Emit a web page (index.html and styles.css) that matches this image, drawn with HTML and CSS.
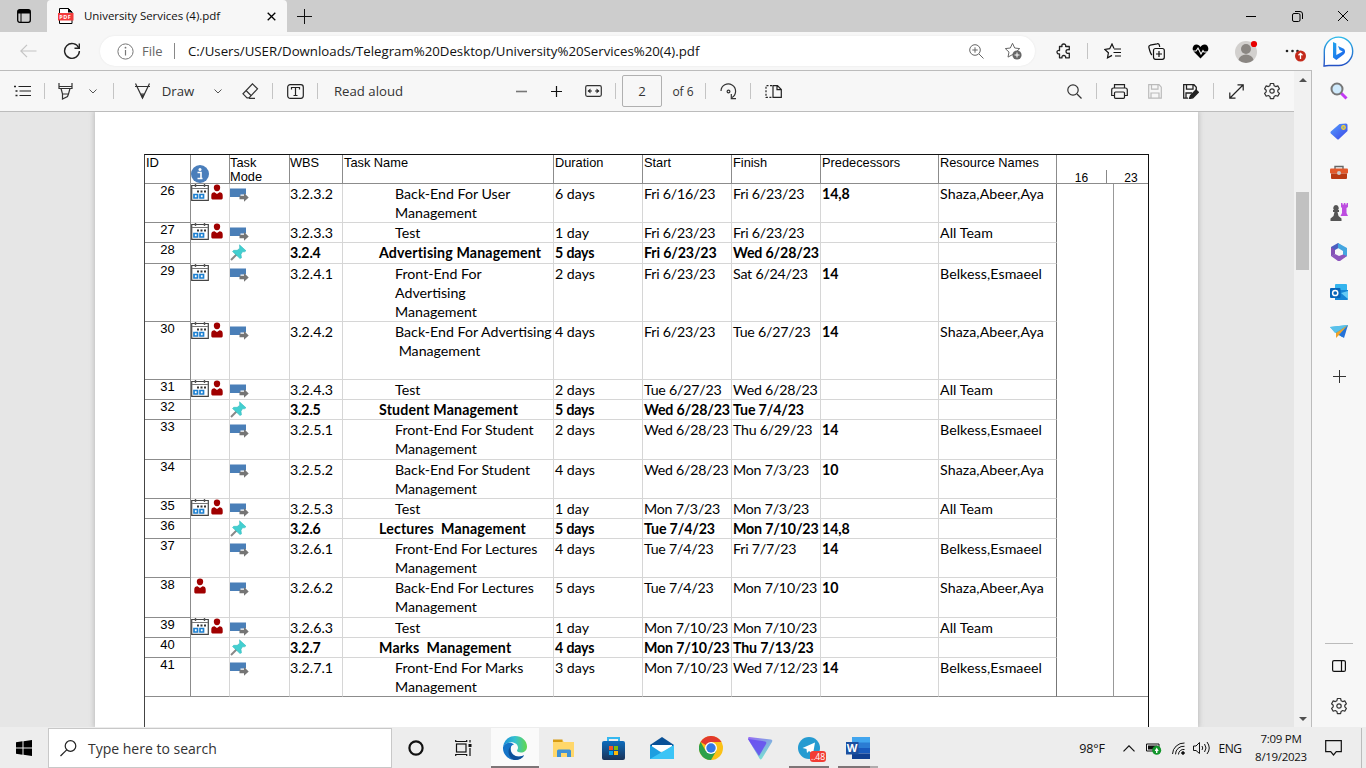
FILE: index.html
```html
<!DOCTYPE html>
<html lang="en">
<head>
<meta charset="utf-8">
<title>University Services (4).pdf</title>
<link rel="stylesheet" href="styles.css">
</head>
<body>
<svg class="sprite" xmlns="http://www.w3.org/2000/svg">
  <symbol id="cal" viewBox="0 0 18 17"><path d="M.7 1.500h16.600v14.800H.7z" fill="#fff" stroke="#444" stroke-width="1.200"/><path d="M1 4.500h16" stroke="#777"/><path d="M4.500 0v3M13.500 0v3" stroke="#555" stroke-width="1.400"/><path d="M6 7.500h2M9.500 7.500h2M13 7.500h2" stroke="#333" stroke-width="2"/><path d="M3 10.500h3.500v3.500H3zM9 10.500h3.500v3.500H9z" fill="#fff" stroke="#1c7fd0" stroke-width="1.700"/></symbol>
  <symbol id="man" viewBox="0 0 12 16"><path d="M6 .5a3.200 3.200 0 0 1 3.200 3.200C9.200 5.500 8 7.300 6 7.300S2.800 5.500 2.800 3.700A3.200 3.200 0 0 1 6 .5zM.3 11.500C.3 9.500 1.500 8.300 3.500 8.300L6 10l2.500-1.700c2 0 3.200 1.200 3.200 3.200v2.500c0 1-1 1.500-2 1.500H2.300c-1 0-2-.5-2-1.500z" fill="#a00000"/></symbol>
  <symbol id="auto" viewBox="0 0 19 14"><path d="M0 .5h16v6h-5.500v2.500H0z" fill="#4a7fb8"/><path d="M9.500 7.700h4.500V5l4.700 4.500-4.700 4.300V11.300H9.500z" fill="#757575"/></symbol>
  <symbol id="pin" viewBox="0 0 17 17"><path d="M1 16l6-6" stroke="#888" stroke-width="2"/><path d="M9.500.8l6.500 6-1.500 1-2 0-1.500 2.500.5 3.500-1.500.8L2.500 7.500l1.200-1.200 3.500 0 2.500-2z" fill="#43cfd0" stroke="#2db5b8" stroke-width=".5"/></symbol>
  <symbol id="chev" viewBox="0 0 10 10"><path d="M1.500 3.500L5 7l3.500-3.500" fill="none" stroke="#555" stroke-width="1"/></symbol>
  <symbol id="gear" viewBox="0 0 18 18"><g fill="none" stroke="#333" stroke-width="1.200"><circle cx="9" cy="9" r="2.200"/><path d="M7.400 1.500h3.200l.5 2.200 1.600.9 2.100-.7 1.600 2.800-1.600 1.500v1.700l1.600 1.500-1.600 2.800-2.100-.7-1.600.9-.5 2.200H7.400l-.5-2.200-1.600-.9-2.100.7-1.600-2.800 1.600-1.500V8.200L1.600 6.700l1.600-2.800 2.100.7 1.600-.9z" stroke-linejoin="round"/></g></symbol>
</svg>

<header class="tabstrip">
  <span class="slot"><svg width="14" height="14" viewBox="0 0 14 14"><rect x=".7" y=".7" width="12.600" height="12.600" rx="2" fill="none" stroke="#000" stroke-width="1.300"/><path d="M1 1h12v3.500H1z"/><path d="M4 4v9" stroke="#000"/></svg></span>
  <div class="tab">
    <svg width="16" height="16" viewBox="0 0 16 16"><path d="M1.500.5h9l3.500 3.500v11.500H1.500z" fill="#fff" stroke="#000"/><path d="M10 0v4.500h4.500" fill="#000"/><rect y="5" width="15.500" height="7.500" fill="#f33b3b"/><text x="1.300" y="11.200" class="pdftext">PDF</text></svg>
    <span class="tab-title">University Services (4).pdf</span>
    <svg class="tab-close" width="9" height="9" viewBox="0 0 9 9"><path d="M.7.7l7.600 7.600M8.300.7L.7 8.300" stroke="#000" stroke-width="1.300"/></svg>
  </div>
  <span class="slot new"><svg width="15" height="15"><path d="M7.500 0v15M0 7.500h15" stroke="#111"/></svg></span>
  <div class="wincontrols">
    <span><svg width="10" height="10"><path d="M0 5.500h10" stroke="#000"/></svg></span>
    <span><svg width="11" height="11" viewBox="0 0 11 11" fill="none" stroke="#000"><rect x=".5" y="2.500" width="7.500" height="8" rx="1.500"/><path d="M3 .5h5a2.500 2.500 0 0 1 2.500 2.500v5"/></svg></span>
    <span><svg width="10" height="10"><path d="M0 0l10 10M10 0L0 10" stroke="#000"/></svg></span>
  </div>
</header>

<nav class="addressbar">
  <span><svg width="17" height="14" viewBox="0 0 17 14" fill="none" stroke="#c4c4c4" stroke-width="1.200"><path d="M1 7h15.500M7 .8L.8 7 7 13.200"/></svg></span>
  <span><svg width="18" height="18" viewBox="0 0 18 18" fill="none" stroke="#222" stroke-width="1.400"><path d="M15.800 6A7.400 7.400 0 1 0 16.400 9"/><path d="M16.300 1.500V6.200h-4.800"/></svg></span>
  <i></i>
  <div class="url">
    <svg width="17" height="17" viewBox="0 0 17 17"><circle cx="8.500" cy="8.500" r="7.600" fill="none" stroke="#777"/><path d="M8.500 7v5.500" stroke="#777" stroke-width="1.200"/><circle cx="8.500" cy="4.700" r=".9" fill="#777"/></svg>
    <span class="scheme">File</span><i class="usep"></i>
    <span class="path">C:/Users/USER/Downloads/Telegram%20Desktop/University%20Services%20(4).pdf</span>
    <svg class="uzoom" width="15" height="15" viewBox="0 0 15 15" fill="none" stroke="#666"><circle cx="6" cy="6" r="5.300"/><path d="M10 10l4.500 4.500M3.300 6h5.400M6 3.300v5.400"/></svg>
    <svg width="18" height="18" viewBox="0 0 18 18"><path d="M8.500 1.300l2.200 4.700 5 .6-3.700 3.500 1 5-4.500-2.500L4 15.100l1-5L1.300 6.600l5-.6z" fill="#fff" stroke="#666"/><circle cx="13" cy="13" r="4.600" fill="#666"/><path d="M10.500 13h5M13 10.500v5" stroke="#fff"/></svg>
  </div>
  <i></i>
  <span><svg width="16" height="17" viewBox="0 0 16 17" fill="none" stroke="#222" stroke-width="1.300"><path d="M3.500 3.500H6C5.500 1.500 6.500 1 7.800 1s2.300.8 1.800 2.500h3.700v3.300c-2-.5-3.300.3-3.300 1.700s1.300 2.200 3.300 1.700v4.600H9.600c.4-1.500-.5-2.300-1.800-2.300S5.600 13.300 6 14.800H3.500v-4C1.700 11 1 10.200 1 9s1-1.800 2.500-1.500z" stroke-linejoin="round"/></svg></span>
  <b></b>
  <span><svg width="17" height="16" viewBox="0 0 17 16" fill="none" stroke="#111" stroke-width="1.200"><path d="M10 5.500L8 1 5.700 5.700.8 6.400l3.600 3.400-.9 5 4.500-2.400"/><path d="M10 6h7M9.500 9.500H17M11 13h6"/></svg></span>
  <span><svg width="17" height="17" viewBox="0 0 17 17" fill="none" stroke="#111" stroke-width="1.200"><path d="M4 12C2.500 11 1.500 7 .9 4.500c-.3-1.300.3-2 1.300-2.300L9 .8c1.300-.3 2 .2 2.300 1.200l.4 2"/><rect x="5.500" y="5.500" width="10.800" height="10.800" rx="2"/><path d="M8 11h6M11 8v6"/></svg></span>
  <span><svg width="17" height="15" viewBox="0 0 17 15"><path d="M8.500 14.500L1.600 7.600C-.5 4.900 1 .5 4.500.5 6.300.5 7.600 1.600 8.500 3c.9-1.400 2.200-2.500 4-2.500 3.500 0 5 4.400 2.900 7.100z"/><path d="M0 7h4l2-3 3 6 2-3.500 1 1.500h5" fill="none" stroke="#f7f7f7" stroke-width="1.100"/></svg></span>
  <span><svg width="23" height="23" viewBox="0 0 23 23"><circle cx="11" cy="12" r="11" fill="#d2d0ce"/><circle cx="11" cy="9" r="5" fill="#8a8682"/><path d="M3.500 20a7.600 6.500 0 0 1 15 0A11 11 0 0 1 3.500 20z" fill="#8a8682"/><circle cx="19" cy="4" r="3.100" fill="#e80000"/></svg></span>
  <span><svg width="28" height="22" viewBox="0 0 28 22"><g fill="#222"><circle cx="8" cy="11" r="1.300"/><circle cx="13.500" cy="11" r="1.300"/><circle cx="18.500" cy="11" r="1.300"/></g><circle cx="21.500" cy="16" r="5.500" fill="#c42b1c"/><path d="M21.500 19v-5.500M19.500 15.300l2-2 2 2" fill="none" stroke="#fff" stroke-width="1.300"/></svg></span>
  <span><svg width="31" height="31" viewBox="0 0 31 31"><defs><linearGradient id="bg1" x2="0" y2="1"><stop stop-color="#2cb9e9"/><stop offset="1" stop-color="#2450c4"/></linearGradient><linearGradient id="bg2" x2="1" y2="1"><stop stop-color="#23a6ee"/><stop offset="1" stop-color="#1b5dea"/></linearGradient></defs><path d="M1 30c.5-4 .3-9 .3-14.500A14.200 14.200 0 1 1 15.800 29.500H6C4 29.500 2.500 30 1 30z" fill="#fff" stroke="url(#bg1)" stroke-width="1.400"/><path d="M10 6l3.300 1.600v11.500l6.500-3.500-3.200-1.500-1.600-4 5.800 2.600c1.500 1 2 4.500-.5 6L13.300 24 10 21.500z" fill="url(#bg2)"/></svg></span>
</nav>

<div class="middle">
  <div class="viewer">
    <div class="toolbar">
      <span><svg width="17" height="12" viewBox="0 0 17 12"><path d="M4.500 1.500H17M5.500 6H17M5.500 10.500H17" stroke="#222" stroke-width="1.200"/><path d="M0 1.500h2M1.500 6h2M1.500 10.500h2" stroke="#222" stroke-width="1.700"/></svg></span><b></b>
      <span><svg width="15" height="17" viewBox="0 0 15 17" fill="none" stroke="#333" stroke-width="1.200"><path d="M1 0v5.500h13V0M1.500 3.500h12M3 5.500L4.500 11h6L12 5.500M4.500 11v5l5-2.500 1-2.500"/></svg></span>
      <span><svg width="10" height="10"><use href="#chev"/></svg></span><b></b>
      <span><svg width="17" height="17" viewBox="0 0 17 17"><path d="M1.500.5L8.500 15l7-14.500M1 3.500h15M6 11h5" fill="none" stroke="#333" stroke-width="1.200"/><path d="M6.500 11.500h4l-2 4.500z" fill="#333"/></svg></span>
      <span class="txt">Draw</span>
      <span><svg width="10" height="10"><use href="#chev"/></svg></span>
      <span><svg width="17" height="16" viewBox="0 0 17 16" fill="none" stroke="#333" stroke-width="1.200"><path d="M10.500.8l5 5-8.500 9H5L1 10.800zM4 7.500l5 5M7 15.300h6"/></svg></span><b></b>
      <span><svg width="17" height="15" viewBox="0 0 17 15" fill="none" stroke="#222" stroke-width="1.200"><rect x=".7" y=".7" width="15.600" height="13.600" rx="2.500"/><path d="M4.500 5.500v-2h8v2M8.500 3.500v8M6.500 11.500h4"/></svg></span><b></b>
      <span class="txt">Read aloud</span><i></i>
      <span><svg width="11" height="11"><path d="M0 5.500h11" stroke="#777" stroke-width="1.600"/></svg></span>
      <span><svg width="11" height="11"><path d="M0 5.500h11M5.500 0v11" stroke="#111" stroke-width="1.200"/></svg></span>
      <span><svg width="17" height="12" viewBox="0 0 17 12" fill="none" stroke="#333" stroke-width="1.200"><rect x=".7" y=".7" width="15.600" height="10.600" rx="1.500"/><path d="M3 6h4M10 6h4"/><path d="M5.500 3.500L2.500 6l3 2.500zM11.500 3.500l3 2.500-3 2.500z" fill="#333" stroke="none"/></svg></span><b></b>
      <span class="pageno">2</span><span class="txt of">of 6</span><b></b>
      <span><svg width="17" height="17" viewBox="0 0 17 17" fill="none" stroke="#333" stroke-width="1.200"><path d="M1 8A7.300 7.300 0 1 1 12 14.500"/><circle cx="8.500" cy="8.500" r="1.400"/><path d="M11.300 11v4.700H16"/></svg></span><b></b>
      <span><svg width="17" height="13" viewBox="0 0 17 13" fill="none" stroke="#222" stroke-width="1.200"><path d="M7 .7H1v11.600h6" stroke-dasharray="2 1.500"/><path d="M8 .7h4.500L16.300 4.500v7.800H8zM12 .7v4h4"/></svg></span><i></i>
      <span><svg width="15" height="15" viewBox="0 0 15 15" fill="none" stroke="#333" stroke-width="1.200"><circle cx="6" cy="6" r="5.200"/><path d="M10 10l4.500 4.500"/></svg></span><b></b>
      <span><svg width="17" height="15" viewBox="0 0 17 15" fill="none" stroke="#222" stroke-width="1.200"><path d="M3.500 4V.7h10V4M3.500 11.500H.7V6c0-1.300.7-2 2-2h11.600c1.300 0 2 .7 2 2v5.500h-2.800"/><rect x="3.500" y="8" width="10" height="6.300" rx="1"/></svg></span>
      <span><svg width="14" height="15" viewBox="0 0 14 15" fill="none" stroke="#bbb" stroke-width="1.200"><path d="M.7.7H11l2.300 2.500v11H.7zM3.500.7v4.500H10V.7M3 14V9h8v5"/></svg></span>
      <span><svg width="16" height="15" viewBox="0 0 16 15" fill="none" stroke="#222" stroke-width="1.300"><path d="M5 14.200H.7V.7H11l2.300 2.500v3M3.500.7v4.500H10V.7M3 14V9h6"/><path d="M6.500 14.500l1-3L13 6l2.300 2.300-5.500 5.500z" fill="#222"/></svg></span><b></b>
      <span><svg width="15" height="15" viewBox="0 0 15 15" fill="none" stroke="#222" stroke-width="1.200"><path d="M1 14L14 1M8.500.8h5.700v5.700M.8 8.500v5.700h5.700"/></svg></span>
      <span><svg width="18" height="18"><use href="#gear"/></svg></span>
    </div>
    <main class="canvas"><div class="page"><div class="chart">
      <div class="row head"><div>ID</div><div class="info"><svg width="18" height="18" viewBox="0 0 18 18"><circle cx="9" cy="9" r="9" fill="#4a7ebb"/><circle cx="9" cy="4.500" r="1.500" fill="#fff"/><path d="M6.500 7.500H10v6h1.500M6.500 13.500h5" fill="none" stroke="#fff" stroke-width="1.600"/></svg></div><div>Task<br>Mode</div><div>WBS</div><div>Task Name</div><div>Duration</div><div>Start</div><div>Finish</div><div>Predecessors</div><div>Resource Names</div><div class="scale"><span>16</span><span>23</span></div></div>
      <div class="row h39"><div>26</div><div><svg class="cal"><use href="#cal"/></svg><svg class="man"><use href="#man"/></svg></div><div><svg class="auto"><use href="#auto"/></svg></div><div>3.2.3.2</div><div>Back-End For User<br>Management</div><div>6 days</div><div>Fri 6/16/23</div><div>Fri 6/23/23</div><div>14,8</div><div>Shaza,Abeer,Aya</div><div></div><div></div></div>
      <div class="row h20"><div>27</div><div><svg class="cal"><use href="#cal"/></svg><svg class="man"><use href="#man"/></svg></div><div><svg class="auto"><use href="#auto"/></svg></div><div>3.2.3.3</div><div>Test</div><div>1 day</div><div>Fri 6/23/23</div><div>Fri 6/23/23</div><div></div><div>All Team</div><div></div><div></div></div>
      <div class="row h21 sum"><div>28</div><div></div><div><svg class="pin"><use href="#pin"/></svg></div><div>3.2.4</div><div>Advertising Management</div><div>5 days</div><div>Fri 6/23/23</div><div>Wed 6/28/23</div><div></div><div></div><div></div><div></div></div>
      <div class="row h58"><div>29</div><div><svg class="cal"><use href="#cal"/></svg></div><div><svg class="auto"><use href="#auto"/></svg></div><div>3.2.4.1</div><div>Front-End For<br>Advertising<br>Management</div><div>2 days</div><div>Fri 6/23/23</div><div>Sat 6/24/23</div><div>14</div><div>Belkess,Esmaeel</div><div></div><div></div></div>
      <div class="row h58"><div>30</div><div><svg class="cal"><use href="#cal"/></svg><svg class="man"><use href="#man"/></svg></div><div><svg class="auto"><use href="#auto"/></svg></div><div>3.2.4.2</div><div>Back-End For Advertising<br> Management</div><div>4 days</div><div>Fri 6/23/23</div><div>Tue 6/27/23</div><div>14</div><div>Shaza,Abeer,Aya</div><div></div><div></div></div>
      <div class="row h20"><div>31</div><div><svg class="cal"><use href="#cal"/></svg><svg class="man"><use href="#man"/></svg></div><div><svg class="auto"><use href="#auto"/></svg></div><div>3.2.4.3</div><div>Test</div><div>2 days</div><div>Tue 6/27/23</div><div>Wed 6/28/23</div><div></div><div>All Team</div><div></div><div></div></div>
      <div class="row h20 sum"><div>32</div><div></div><div><svg class="pin"><use href="#pin"/></svg></div><div>3.2.5</div><div>Student Management</div><div>5 days</div><div>Wed 6/28/23</div><div>Tue 7/4/23</div><div></div><div></div><div></div><div></div></div>
      <div class="row h40"><div>33</div><div></div><div><svg class="auto"><use href="#auto"/></svg></div><div>3.2.5.1</div><div>Front-End For Student<br>Management</div><div>2 days</div><div>Wed 6/28/23</div><div>Thu 6/29/23</div><div>14</div><div>Belkess,Esmaeel</div><div></div><div></div></div>
      <div class="row h39"><div>34</div><div></div><div><svg class="auto"><use href="#auto"/></svg></div><div>3.2.5.2</div><div>Back-End For Student<br>Management</div><div>4 days</div><div>Wed 6/28/23</div><div>Mon 7/3/23</div><div>10</div><div>Shaza,Abeer,Aya</div><div></div><div></div></div>
      <div class="row h20"><div>35</div><div><svg class="cal"><use href="#cal"/></svg><svg class="man"><use href="#man"/></svg></div><div><svg class="auto"><use href="#auto"/></svg></div><div>3.2.5.3</div><div>Test</div><div>1 day</div><div>Mon 7/3/23</div><div>Mon 7/3/23</div><div></div><div>All Team</div><div></div><div></div></div>
      <div class="row h20 sum"><div>36</div><div></div><div><svg class="pin"><use href="#pin"/></svg></div><div>3.2.6</div><div>Lectures  Management</div><div>5 days</div><div>Tue 7/4/23</div><div>Mon 7/10/23</div><div>14,8</div><div></div><div></div><div></div></div>
      <div class="row h39"><div>37</div><div></div><div><svg class="auto"><use href="#auto"/></svg></div><div>3.2.6.1</div><div>Front-End For Lectures<br>Management</div><div>4 days</div><div>Tue 7/4/23</div><div>Fri 7/7/23</div><div>14</div><div>Belkess,Esmaeel</div><div></div><div></div></div>
      <div class="row h40"><div>38</div><div><svg class="man solo"><use href="#man"/></svg></div><div><svg class="auto"><use href="#auto"/></svg></div><div>3.2.6.2</div><div>Back-End For Lectures<br>Management</div><div>5 days</div><div>Tue 7/4/23</div><div>Mon 7/10/23</div><div>10</div><div>Shaza,Abeer,Aya</div><div></div><div></div></div>
      <div class="row h20"><div>39</div><div><svg class="cal"><use href="#cal"/></svg><svg class="man"><use href="#man"/></svg></div><div><svg class="auto"><use href="#auto"/></svg></div><div>3.2.6.3</div><div>Test</div><div>1 day</div><div>Mon 7/10/23</div><div>Mon 7/10/23</div><div></div><div>All Team</div><div></div><div></div></div>
      <div class="row h20 sum"><div>40</div><div></div><div><svg class="pin"><use href="#pin"/></svg></div><div>3.2.7</div><div>Marks  Management</div><div>4 days</div><div>Mon 7/10/23</div><div>Thu 7/13/23</div><div></div><div></div><div></div><div></div></div>
      <div class="row h39 last"><div>41</div><div></div><div><svg class="auto"><use href="#auto"/></svg></div><div>3.2.7.1</div><div>Front-End For Marks<br>Management</div><div>3 days</div><div>Mon 7/10/23</div><div>Wed 7/12/23</div><div>14</div><div>Belkess,Esmaeel</div><div></div><div></div></div>
    </div></div></main>
  </div>
  <div class="scrollbar"><svg width="8" height="4"><path d="M0 4l4-4 4 4z" fill="#505050"/></svg><div class="thumb"></div><svg class="down" width="8" height="4"><path d="M0 0l4 4 4-4z" fill="#505050"/></svg></div>
  <aside class="sidebar">
    <span><svg width="18" height="18" viewBox="0 0 18 18"><path d="M10.500 10.500l6 6" stroke="#c239f3" stroke-width="3"/><circle cx="7" cy="7" r="5.500" fill="#cfeafc" stroke="#777" stroke-width="2"/></svg></span>
    <span><svg width="18" height="17" viewBox="0 0 18 17"><defs><linearGradient id="tg" x2="1" y2="1"><stop stop-color="#55a0ff"/><stop offset="1" stop-color="#3c45e6"/></linearGradient></defs><path d="M9.500 1L16 .5q1.500 0 1.500 1.500v6L9 16q-1 1-2 0L.8 10.500q-.8-1 0-2z" fill="url(#tg)"/><circle cx="13.500" cy="4.500" r="1.800" fill="#8aa" stroke="#ffd42a" stroke-width="1.200"/></svg></span>
    <span><svg width="18" height="15" viewBox="0 0 18 15"><path d="M5 4V1.500h8V4" fill="none" stroke="#666" stroke-width="1.400"/><rect y="3.500" width="18" height="5" rx="1" fill="#e2582a"/><path d="M1 8.500h16v4.500q0 1-1 1H2q-1 0-1-1z" fill="#b93a13"/><circle cx="9" cy="8" r="2" fill="#ccc"/></svg></span>
    <span><svg width="18" height="18" viewBox="0 0 18 18"><path d="M11 0h1.500v1.500h1.300V0h1.600v1.500h1.200V0H18v4l-1.500 1v5l1.500 3h-7.500l1.500-3V5L11 4z" fill="#bd4de0"/><path d="M6 2a3 3 0 0 1 2 5h1v2H7.500l1 4 3 2.500V18H.5v-2.500l3-2.500 1-4H3V7h1a3 3 0 0 1 2-5z" fill="#555"/></svg></span>
    <span><svg width="18" height="18" viewBox="0 0 18 18"><path d="M8 0L1 4v9l4-2V7l7-4z" fill="#4b5fc1"/><path d="M8 0l9 5v8l-4 2V8L8 5z" fill="#44a6e0"/><path d="M1 13l4-2 4 2 4-1.500 4 1.500-7 5H8z" fill="#8d55bd"/><path d="M1 4v9l4-2V7z" fill="#8350b5"/></svg></span>
    <span><svg width="18" height="17" viewBox="0 0 18 17"><rect x="5" width="12" height="8" rx="1" fill="#34b4ee"/><path d="M5 6h13v9q0 1-1 1H5z" fill="#1685d6"/><path d="M11 9l7-2v8z" fill="#67cbf5"/><rect y="4" width="10.500" height="10" rx="1" fill="#0764b8"/><circle cx="5.200" cy="9" r="2.600" fill="none" stroke="#fff" stroke-width="1.500"/></svg></span>
    <span><svg width="18" height="14" viewBox="0 0 18 14"><path d="M0 2L18 0 12 12 6 8z" fill="#2db1e8"/><path d="M0 2L18 0 5 8z" fill="#5ac1ea"/><path d="M18 0L6 8v5l3-3z" fill="#eda22b"/><path d="M18 0l-9 10 5 3z" fill="#2672d8"/></svg></span>
    <span><svg width="13" height="13"><path d="M6.500 0v13M0 6.500h13" stroke="#333"/></svg></span>
    <i></i><hr>
    <span><svg width="14" height="12" viewBox="0 0 14 12" fill="none" stroke="#111" stroke-width="1.200"><rect x=".6" y=".6" width="12.800" height="10.800" rx="1.500"/><path d="M9.500 1v10"/></svg></span>
    <span><svg width="18" height="18"><use href="#gear"/></svg></span>
  </aside>
</div>

<footer class="taskbar">
  <span class="start"><svg width="16" height="16" viewBox="0 0 16 16"><path d="M0 2.300L6.500 1.300v6.200H0zM7.500 1.200L16 0v7.500H7.500zM0 8.500h6.500v6.200L0 13.700zM7.500 8.500H16V16l-8.500-1.200z"/></svg></span>
  <div class="search"><svg width="17" height="17" viewBox="0 0 17 17" fill="none" stroke="#222" stroke-width="1.200"><circle cx="10.500" cy="6" r="5.300"/><path d="M6.700 9.800L.5 16"/></svg><span>Type here to search</span></div>
  <span><svg width="16" height="16"><circle cx="8" cy="8" r="6.600" fill="none" stroke="#111" stroke-width="2.200"/></svg></span>
  <span class="tview"><svg width="17" height="16" viewBox="0 0 17 16" fill="none" stroke="#111" stroke-width="1.200"><rect x="1.500" y="4" width="9.500" height="8"/><path d="M.7 0v1.500h11V0M.7 16v-1.500h11V16M15 0v2.500M15 8v8"/><path d="M13.500 4h3v3h-3z" fill="#111" stroke="none"/></svg></span>
  <div class="apps">
    <span class="active run"><svg width="24" height="24" viewBox="0 0 24 24"><defs><linearGradient id="e1" x2="1"><stop stop-color="#1b8fd8"/><stop offset=".5" stop-color="#35c1d0"/><stop offset="1" stop-color="#62d84b"/></linearGradient></defs><path d="M0 11C1 4 6 0 12 0c7 0 12 5 12 10.500 0 4-3 6-6 6-2.500 0-4-1-4-2 0-.8 1-1 1-3C15 8 10 5 5 7 2 8 1 9.500 0 11z" fill="url(#e1)"/><path d="M0 11c2-4.500 8-5.500 11-2.500-3 .5-4 3.500-3 6.500 1 3.500 5 6 9 5.500 2-.3 3-1 4-1C18.500 23 15 24 12 24 5 24-.5 18 0 11z" fill="#1574c8"/><path d="M8 10c-2 5 1 9.500 6 10.500 3 .5 5-.5 7-1-2 3.500-6 4.700-10 4.400C5.500 22 3.500 14 8 10z" fill="#0c4f98"/></svg></span>
    <span><svg width="22" height="19" viewBox="0 0 22 19"><path d="M0 1h9l2 2h10v15H0z" fill="#ffd76a"/><path d="M0 .5h9.500V3H0z" fill="#d79b12"/><path d="M4 18v-6q0-1.500 1.500-1.500h11q1.500 0 1.500 1.500v6h-4v-4H8v4z" fill="#3f91d4"/></svg></span>
    <span><svg width="23" height="23" viewBox="0 0 23 23"><defs><linearGradient id="st" x2="0" y2="1"><stop stop-color="#0d6cbd"/><stop offset="1" stop-color="#1b3358"/></linearGradient></defs><path d="M6 5V1h11v4" fill="none" stroke="#35b8f0" stroke-width="2"/><rect y="4" width="23" height="19" rx="2" fill="url(#st)"/><path d="M7 9h4v4H7z" fill="#f35325"/><path d="M12 9h4v4h-4z" fill="#81bc06"/><path d="M7 14h4v4H7z" fill="#05a6f0"/><path d="M12 14h4v4h-4z" fill="#ffba08"/></svg></span>
    <span><svg width="24" height="23" viewBox="0 0 24 23"><path d="M0 8L12 0l12 8v3H0z" fill="#0a5197"/><path d="M2 8h20v6H2z" fill="#fff"/><path d="M0 8l12 8 12-8v14H0z" fill="#1e9ee0"/><path d="M0 22L24 8v14z" fill="#3cc4f6"/></svg></span>
    <span><svg width="24" height="24" viewBox="0 0 24 24"><circle cx="12" cy="12" r="12" fill="#fbc116"/><path d="M12 12L1.600 6A12 12 0 0 1 22.400 6H12z" fill="#e2392d"/><path d="M1.600 6A12 12 0 0 0 12 24l5.200-9L12 12 6.800 15z" fill="#2da04a"/><circle cx="12" cy="12" r="6" fill="#fff"/><circle cx="12" cy="12" r="4.700" fill="#3478e5"/></svg></span>
    <span><svg width="25" height="23" viewBox="0 0 25 23"><defs><linearGradient id="pv" x2=".6" y2="1"><stop stop-color="#9567f5"/><stop offset="1" stop-color="#76e5d2"/></linearGradient></defs><path d="M1 0l22 2.500q2 .5 1 2.500L14 21.500q-1.500 2-2.500 0L0 2Q0 .2 1 0z" fill="url(#pv)"/><path d="M0 2l17 2.500q2 .5 1 2.500l-7 12z" fill="#654cf0" opacity=".85"/></svg></span>
    <span class="run mid tele"><svg width="22" height="22" viewBox="0 0 22 22"><circle cx="11" cy="11" r="11" fill="#259bd1"/><path d="M4.500 11L17 5.500 15 17l-4-3-2 2-.5-4z" fill="#fff"/></svg><em>..48</em></span>
    <span class="run mid word"><svg width="24" height="22" viewBox="0 0 24 22"><path d="M6 0h18v6H6z" fill="#41a5ee"/><path d="M6 5.500h18V11H6z" fill="#2b7cd3"/><path d="M6 11h18v5.500H6z" fill="#185abd"/><path d="M6 16.500h18V22H6z" fill="#103f91"/><rect y="5" width="12.500" height="12.500" fill="#1b4f9f"/><text x=".8" y="15" class="wtext">W</text></svg></span>
  </div>
  <div class="tray">
    <span class="temp">98°F</span>
    <span><svg width="12" height="7" viewBox="0 0 12 7"><path d="M.5 6.300L6 .8l5.500 5.500" fill="none" stroke="#111" stroke-width="1.200"/></svg></span>
    <span><svg width="16" height="13" viewBox="0 0 16 13"><path d="M.5 2h12.500v7H.5z" fill="#eee" stroke="#111"/><path d="M2 3.500h9.500v4H2z" fill="#111"/><circle cx="10.700" cy="8.300" r="4.500" fill="#12962b"/><path d="M10.700 5.500L8.700 9h1.300v2h1.400V9h1.300z" fill="#fff"/></svg></span>
    <span><svg width="13" height="13" viewBox="0 0 13 13" fill="none" stroke="#111"><path d="M.5 12A11.500 11.500 0 0 1 12.500 1M3.500 12.300A8 8 0 0 1 12.500 4.300M6.500 12.500a5 5 0 0 1 6-5"/><circle cx="11" cy="11" r="1.300" fill="#111"/></svg></span>
    <span><svg width="17" height="14" viewBox="0 0 17 14" fill="none" stroke="#111"><path d="M.5 5H3l3.500-3.500v11L3 9.500H.5zM9 5q1.500 2 0 4M11.500 3q3 4 0 8M14 1q4.500 6 0 12"/></svg></span>
    <span class="lang">ENG</span>
    <span class="clock">7:09 PM<br>8/19/2023</span>
    <span><svg width="17" height="16" viewBox="0 0 17 16"><path d="M.7.7h15.600v11h-5L8.500 15l-2.800-3.300h-5z" fill="none" stroke="#111" stroke-width="1.200"/></svg></span>
    <i></i>
  </div>
</footer>
</body>
</html>
```
FILE: styles.css
```css
* { box-sizing: border-box; }
body { margin: 0; width: 1366px; height: 768px; overflow: hidden; display: flex; flex-direction: column; background: #f7f7f7; font-family: "Open Sans", "Noto Sans", sans-serif; color: #111; }
svg { display: block; flex: none; }
.sprite { display: none; }

.tabstrip { height: 32px; background: #cdcdcd; display: flex; }
.slot { width: 47px; display: grid; place-items: center; }
.new { width: 34px; }
.tab { width: 240px; background: #f7f7f7; border-radius: 4px 4px 0 0; display: flex; align-items: center; padding: 0 11px; }
.tab-title { font-size: 11.500px; margin-left: 10px; padding-bottom: 2px; letter-spacing: -.05px; white-space: nowrap; flex: 1; }
.pdftext { font: bold 5.500px "Open Sans", sans-serif; fill: #fff; letter-spacing: .5px; }
.wincontrols { margin-left: auto; display: flex; }
.wincontrols span { width: 46px; display: grid; place-items: center; }

.addressbar { height: 38px; display: grid; grid-template-columns: 56px 32px 12px 935px 11px 36px 10px 40px 48px 40px 52px 42px 48px; align-items: center; justify-items: center; }
.addressbar > b, .toolbar > b { width: 1px; height: 16px; background: #c4c4c4; }
.url { width: 935px; height: 30px; border-radius: 15px; background: #fff; display: flex; align-items: center; padding: 0 13px 0 17px; box-shadow: 0 0 2px #e4e4e4; font-size: 13px; white-space: nowrap; }
.scheme { color: #666; margin-left: 8px; width: 24px; }
.usep { width: 1px; height: 16px; background: #888; margin-left: 8px; margin-right: 13px; }
.path { flex: 1; font-size: 13.250px; }
.uzoom { margin-right: 20px; }

.middle { height: 657px; display: flex; }
.viewer { width: 1294px; border-top: 1px solid #bcbcbc; display: flex; flex-direction: column; }
.toolbar { height: 41px; border-bottom: 1px solid #bcbcbc; display: grid; grid-template-columns: 44px 1px 40px 16px 24px 34px 38px 42px 22px 22px 24px 20px 83px 93px 36px 34px 40px 5px 48px 34px 10px 36px 8px 38px 1fr 32px 12px 34px 38px 34px 10px 36px 36px; padding-right: 4px; align-items: center; justify-items: center; font-size: 13.200px; color: #333; }
.txt { white-space: nowrap; }
.of { font-size: 12px; }
.pageno { width: 40px; height: 32px; border: 1px solid #b0b0b0; border-radius: 2px; display: grid; place-items: center; }

.canvas { flex: 1; background: #e6e6e6; display: flex; justify-content: center; overflow: hidden; }
.page { width: 1103px; margin-left: -1px; background: #fff; box-shadow: 0 0 5px 1px #bdbdbd; padding: 42px 49px 0; }
.chart { width: 1005px; height: 640px; border: 1px solid #111; border-left-color: #444; }
.row { display: grid; grid-template-columns: 46px 39px 60px 53px 211px 89px 89px 89px 118px 118px 57px 34px; font: 14.200px/19px Lato, sans-serif; color: #000; }
.row > div { border-right: 1px solid #d6d6d6; border-bottom: 1px solid #d6d6d6; white-space: pre; padding: 0 0 0 1px; display: block; min-width: 0; }
.row > div:nth-child(1) { font: 13px/14px "Liberation Sans", sans-serif; text-align: center; letter-spacing: 0; padding: 0; border-color: #8c8c8c; }
.row > div:nth-child(2) { display: flex; padding: 0; }
.row > div:nth-child(3) { padding: 0; }
.row > div:nth-child(4) { padding-left: 0; }
.row:not(.head) > div:nth-child(5) { padding-left: 52px; }
.row:not(.head):not(.sum) > div:nth-child(7), .row:not(.head):not(.sum) > div:nth-child(8) { letter-spacing: -.22px; }
.row:not(.head) > div:nth-child(9) { font-weight: bold; letter-spacing: -.1px; }
.row:not(.head) > div:nth-child(10) { letter-spacing: .07px; }
.row > div:nth-child(10) { border-right-color: #777; }
.row:not(.head) > div:nth-child(11) { border-bottom: 0; border-right-color: #999; }
.row > div:nth-child(12) { border: 0; }
.sum { font-weight: bold; letter-spacing: -.15px; }
.row.sum > div:nth-child(5) { padding-left: 36px; letter-spacing: .16px; }
.row.last > div:nth-child(n) { border-bottom: 1px solid #8c8c8c; }
.row.head { height: 29px; font: 12.800px/14px "Liberation Sans", sans-serif; }
.row.head > div:nth-child(n) { border-color: #8c8c8c; padding: 1px 0 0 1px; text-align: left; height: 29px; }
.row.head > div:nth-child(3), .row.head > div:nth-child(4) { padding-left: 0; }
.row.head > div.info { padding: 10px 0 0; }
.row.head > div.scale { grid-column: 11 / 13; display: grid; grid-template-columns: 50px 41px; padding: 15px 0 0; border-right: 0; font-size: 12px; line-height: 16px; text-align: center; }
.scale span { height: 13px; }
.scale span:first-child { border-right: 1px solid #888; }
.scale span:last-child { padding-left: 7px; }
.h20 { height: 20px; } .h21 { height: 21px; } .h39 { height: 39px; } .h40 { height: 40px; } .h58 { height: 58px; }
.cal { width: 18px; height: 17px; }
.man { width: 12px; height: 16px; margin-left: 2px; }
.man.solo { margin-left: 3px; }
.auto { width: 19px; height: 14px; margin-top: 4px; }
.pin { width: 17px; height: 17px; margin: 1px 0 0; }

.scrollbar { width: 18px; border: solid #bcbcbc; border-width: 1px 1px 0 0; background: #f1f1f1; display: flex; flex-direction: column; align-items: center; padding: 7px 0 6px; }
.thumb { width: 13px; height: 78px; margin-top: 110px; background: #c1c1c1; }
.down { margin-top: auto; }
.sidebar { flex: 1; display: grid; grid-template-rows: 40px 41px 40px 40px 40px 40px 40px 48px 1fr 1px 44px 36px; place-items: center; padding: 1px 0 3px; }
.sidebar hr { width: 28px; height: 1px; margin: 0; border: 0; background: #bbb; }

.taskbar { height: 41px; background: #ededed; display: flex; font-size: 12px; padding-top: 1px; }
.taskbar > span, .apps span { width: 48px; display: grid; place-items: center; }
.search { width: 344px; background: #fff; border: 1px solid #c8c8c8; display: flex; align-items: center; padding-left: 11px; gap: 11px; font-size: 14px; color: #333; }
.taskbar > .tview { width: 51px; padding-right: 5px; }
.apps { display: flex; gap: 1px; }
.apps span { position: relative; }
.apps .active { background: #fafafa; }
.apps .run { background-image: linear-gradient(#7d7577, #7d7577); background-size: 100% 2px; background-position: bottom; background-repeat: no-repeat; }
.apps .mid { background-size: 40px 2px; }
.apps .word { background-image: linear-gradient(90deg, #7d7577 80%, #b0acad 80%); }
.tele em { position: absolute; left: 25px; top: 23px; width: 16px; height: 11px; border-radius: 3px; background: #f23c34; color: #fff; font: 8.500px/11px "Open Sans", sans-serif; text-align: center; }
.wtext { font: bold 11px "Open Sans", sans-serif; fill: #fff; }
.tray { margin-left: auto; display: grid; grid-template-columns: 48px 26px 24px 24px 22px 36px 66px 38px 14px; place-items: center; white-space: nowrap; }
.tray i { width: 1px; height: 40px; background: #bbb; margin-left: 4px; }
.temp { font-size: 12.500px; letter-spacing: -.1px; }
.clock { text-align: center; font-size: 11.500px; line-height: 18px; letter-spacing: -.3px; }
.lang { letter-spacing: -.5px; }
```
